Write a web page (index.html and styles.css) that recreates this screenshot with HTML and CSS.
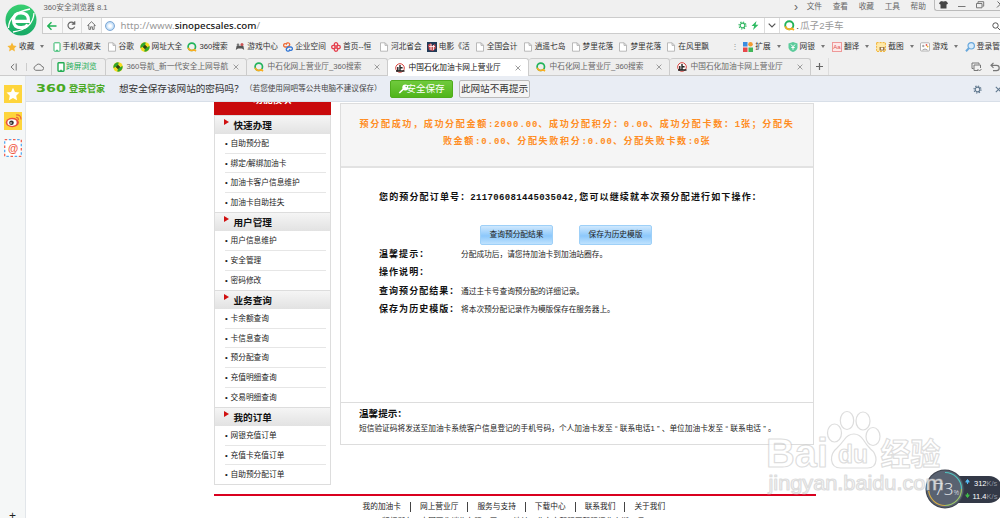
FILE: index.html
```
<!DOCTYPE html>
<html>
<head>
    <title>中国石化加油卡网上营业厅</title>
    <meta charset="utf-8">
    <link rel="stylesheet" href="styles.css">
</head>
<body>
    <svg class="defs">
        <symbol id="doc" viewBox="0 0 10 10"><path d="M1.5 .8h4.7l2.3 2.4v6h-7zM6 1v2.4h2.4" fill="#fff" stroke="#aaa" stroke-width=".8"/></symbol>
        <symbol id="phone" viewBox="0 0 10 10"><rect x="2" y=".8" width="6" height="8.4" rx=".6" fill="#fff" stroke="#2fb768"/><path d="M4 8.3h2" stroke="#2fb768"/></symbol>
        <symbol id="nav" viewBox="0 0 10 10"><circle cx="5" cy="5" r="4.8" fill="#f6dc20"/><path d="M.5 6A4.700 4.700 0 0 1 5.500.3Q6 3 3.500 4.500zM9.500 4a4.700 4.700 0 0 1-5 5.700Q4 7 6.500 5.500z" fill="#31a52e"/><path d="M5 3v4M3 5h4" stroke="#243b12" stroke-width="1.400"/></symbol>
        <symbol id="so" viewBox="0 0 10 10"><g fill="none" stroke-width="1.7"><circle cx="4.8" cy="4.8" r="3.7" stroke="#21b35b"/><path d="M1.2 5.7a3.7 3.7 0 0 0 6 1.9l1.8 1.6" stroke="#f8ad20"/></g></symbol>
        <symbol id="knot" viewBox="0 0 10 10"><g fill="none" stroke="currentColor" stroke-width="1.3"><circle cx="5" cy="2.400" r="1.7"/><circle cx="5" cy="7.600" r="1.7"/><circle class="k2" cx="2.400" cy="5" r="1.7"/><circle cx="7.600" cy="5" r="1.7"/></g></symbol>
        <symbol id="sinopec" viewBox="0 0 10 10"><circle cx="5" cy="5" r="4.3" fill="#fff" stroke="#d9423c"/><path d="M5 2v6M5 4.8h2.6M2.8 4v4M1 8h8.5" fill="none" stroke="#222" stroke-width="1.4"/></symbol>
        <symbol id="star" viewBox="0 0 10 10"><path d="M5 .5l1.4 3 3.2.4-2.3 2.3.6 3.2L5 7.8 2.1 9.4l.6-3.2L.4 3.9l3.200-.4z" fill="currentColor"/></symbol>
        <symbol id="close" viewBox="0 0 10 10"><path d="M2 2l6 6M8 2l-6 6" fill="none" stroke="currentColor" stroke-width="1.2"/></symbol>
        <symbol id="gear" viewBox="0 0 10 10"><circle cx="5" cy="5" r="2.6" fill="none" stroke="currentColor" stroke-width="1.3"/><circle cx="5" cy="5" r="3.9" fill="none" stroke="currentColor" stroke-width="1.3" stroke-dasharray="1.5 1.563"/></symbol>
        <symbol id="game" viewBox="0 0 10 10"><path d="M.8 8l.8-4Q3 2.500 5 4q2-1.500 3.400 0l.8 4-2.200-1.600H3z" fill="#555"/><circle cx="7" cy="2.500" r="1.500" fill="#c55"/><circle cx="3" cy="2.800" r="1.300" fill="#777"/></symbol>
    </svg>

    <!-- browser header -->
    <div class="head">
        <div class="logo">
            <svg width="32" height="32" viewBox="0 0 32 32">
                <defs><linearGradient id="lg" x2="0" y2="1"><stop stop-color="#38cf70"/><stop offset="1" stop-color="#16a966"/></linearGradient></defs>
                <circle cx="16" cy="16" r="15.500" fill="url(#lg)"/>
                <path d="M9 17.300h14.500q.5-8.300-7.500-8.300-7.500 0-7.500 7.500t8 7.200q4.500 0 6.300-3.200" fill="none" stroke="#fff" stroke-width="3.200"/>
                <path d="M3.500 24Q4 9 25 5M29 9Q28 25 8 28" fill="none" stroke="#fff" stroke-width="1.300"/>
            </svg>
        </div>
        <div class="head-main">
            <div class="titlebar">
                <span class="title">360安全浏览器 8.1</span>
                <div class="menu"><span class="more">›</span><span>文件</span><span>查看</span><span>收藏</span><span>工具</span><span>帮助</span></div>
                <div class="winbtns">
                    <svg width="66" height="11" viewBox="0 0 66 11"><path d="M5 1.800l2-.8q1.500 1 3 0l2 .8 1 2-1.500.8v4h-6v-4L4 3.800z" fill="#444"/><path d="M23 6.500h7.500" stroke="#777"/><path d="M41.500 3.500h5.500v4.300h-5.500zM43 3V1.700h5.700v4.500h-1.200" fill="none" stroke="#777"/><path d="M62.500 1.500l6 6M68 1.500l-6 6" stroke="#666"/></svg>
                </div>
            </div>
            <div class="address">
                <div class="navbtn"><svg width="10" height="10" viewBox="0 0 10 10"><path d="M9.500 5H1M4.500 1.300L.8 5l3.700 3.700" fill="none" stroke="#20b255" stroke-width="1.400"/></svg></div>
                <div class="navbtn"><svg width="9" height="9" viewBox="0 0 10 10"><path d="M8.500 6.200A3.800 3.800 0 1 1 7.800 2.500M8.600.3v3.200H5.300" fill="none" stroke="#666" stroke-width="1.300"/></svg></div>
                <div class="navbtn"><svg width="9" height="9" viewBox="0 0 10 10"><path d="M.7 5L5 .8 9.300 5H7.900v4.300H6V6.500H4v2.800H2.100V5z" fill="none" stroke="#666"/></svg></div>
                <div class="globe"></div>
                <div class="url">http://www.<b>sinopecsales.com</b>/</div>
                <div class="addr-tools">
                    <svg width="9" height="9" color="#36b865"><use href="#gear"/></svg>
                    <svg width="8" height="9" viewBox="0 0 8 9"><path d="M5.500 0L.5 5h2.700L2 9l5.500-5.300H4.600z" fill="#2fbb62"/></svg>
                </div>
                <div class="chev"><svg width="8" height="5" viewBox="0 0 8 5"><path d="M.7.7L4 4 7.300.7" fill="none" stroke="#555" stroke-width="1.200"/></svg></div>
                <div class="search"><svg width="11" height="11"><use href="#so"/></svg><i>.</i><span>瓜子2手车</span>
                    <svg class="glass" width="8" height="8" viewBox="0 0 8 8"><circle cx="3.500" cy="3.500" r="2.700" fill="none" stroke="#555"/><path d="M5.500 5.500L8 8" stroke="#555"/></svg>
                </div>
            </div>
        </div>
    </div>

    <div class="bookmarks">
        <div class="bm fav"><svg color="#f7b733"><use href="#star"/></svg>收藏<i class="caret"></i></div>
        <div class="bm mobile"><svg><use href="#phone"/></svg>手机收藏夹</div>
        <div class="bm google"><svg><use href="#doc"/></svg>谷歌</div>
        <div class="bm"><svg><use href="#nav"/></svg>网址大全</div>
        <div class="bm"><svg><use href="#so"/></svg>360搜索</div>
        <div class="bm"><svg><use href="#game"/></svg>游戏中心</div>
        <div class="bm"><svg viewBox="0 0 10 10"><g fill="none" stroke-width="1.300"><path d="M5 5H2.400a1.700 1.700 0 1 1 1-3 1.700 1.700 0 1 1 3 1.500z" stroke="#ee6a35"/><path d="M5 5h2.600a1.700 1.700 0 1 1-1 3 1.700 1.700 0 1 1-3-1.500z" stroke="#3478d6"/></g></svg>企业空间</div>
        <div class="bm"><svg color="#e5404e"><use href="#knot"/></svg>首页--恒</div>
        <div class="bm"><svg><use href="#doc"/></svg>河北省会</div>
        <div class="bm"><svg viewBox="0 0 10 10"><path d="M0 0h10v10H0z" fill="#213a57"/><path d="M1 3l3-2 1 3 3-2 1 4-3 3-4-1z" fill="#c74b50"/><path d="M2 4.500h6M4 2v6M6.500 3v5" stroke="#fff" stroke-width=".8"/></svg>电影《活</div>
        <div class="bm"><svg><use href="#doc"/></svg>全国会计</div>
        <div class="bm"><svg><use href="#doc"/></svg>逍遥七岛</div>
        <div class="bm"><svg><use href="#doc"/></svg>梦里花落</div>
        <div class="bm"><svg><use href="#doc"/></svg>梦里花落</div>
        <div class="bm last"><svg><use href="#doc"/></svg>在风里飘</div>
        <div class="dots">⋮</div>
        <div class="bm ext"><svg viewBox="0 0 10 10"><path d="M0 0h4.500v4.500H0z" fill="#3b8de0"/><circle cx="7.500" cy="2.300" r="2.300" fill="#f59b31"/><path d="M0 5.500h4.500V10H0z" fill="#e8484b"/><path d="M5.500 5.500H10V10H5.500z" fill="#42b65a"/></svg>扩展<i class="caret"></i></div>
        <div class="bm ext"><svg viewBox="0 0 10 10"><path d="M5 0l4.500 1.500v4Q9 8.500 5 10 1 8.500.5 5.500v-4z" fill="#5ccb9b"/><path d="M3 2.500l2 2.300 2-2.300M5 4.800v3M3.300 5.500h3.400" fill="none" stroke="#fff"/></svg>网银<i class="caret"></i></div>
        <div class="bm ext"><span class="aa">Aa</span>翻译<i class="caret"></i></div>
        <div class="bm ext"><svg viewBox="0 0 10 10"><rect x=".6" y=".6" width="8.800" height="8.800" fill="#ffe9a8" stroke="#f2b233" stroke-dasharray="2 1"/><path d="M3.500 5h5v3.500h-5z" fill="#9b7448"/><circle cx="6" cy="6.700" r="1.100" fill="#fff"/></svg>截图<i class="caret"></i></div>
        <div class="bm ext"><svg viewBox="0 0 10 10"><rect x=".5" y=".8" width="9" height="8.200" rx="1" fill="#fff" stroke="#999" stroke-width=".7"/><path d="M2 4h2.500M3.200 2.800v2.400M2.500 8Q5 6 7.500 8" fill="none" stroke="#888" stroke-width=".8"/><circle cx="6.500" cy="3" r=".9" fill="#e85a4f"/><circle cx="7.600" cy="4.600" r=".9" fill="#f0b429"/></svg>游戏<i class="caret"></i></div>
        <div class="bm ext"><svg viewBox="0 0 10 10"><path d="M4.500 5.500L1 9.200" stroke="#69a8dc" stroke-width="2"/><circle cx="6.200" cy="3.800" r="3.200" fill="#d7ebfb" stroke="#69a8dc" stroke-width="1.200"/></svg>登录管家</div>
    </div>

    <div class="tabs">
        <div class="tabs-left">
            <svg width="7" height="8" viewBox="0 0 7 8"><path d="M4.200 1L1 4l3.200 3M6.200.5v7" fill="none" stroke="#777"/></svg>
            <i></i>
            <svg width="11" height="8" viewBox="0 0 11 8"><path d="M2.800 7.300h5.700a2 2 0 0 0 .2-4A3.200 3.200 0 0 0 2.700 3a2.200 2.200 0 0 0 .1 4.300z" fill="none" stroke="#777"/></svg>
        </div>
        <div class="tab cross"><svg class="ico" viewBox="0 0 10 10"><rect x="2" y=".8" width="6" height="8.400" rx=".6" fill="#fff" stroke="#22ac53" stroke-width="1.400"/><path d="M4 8.300h2" stroke="#22ac53"/></svg>跨屏浏览</div>
        <div class="tab"><svg class="ico"><use href="#nav"/></svg><span>360导航_新一代安全上网导航</span><svg class="x"><use href="#close"/></svg></div>
        <div class="tab"><svg class="ico"><use href="#so"/></svg><span>中石化网上营业厅_360搜索</span><svg class="x"><use href="#close"/></svg></div>
        <div class="tab on"><svg class="ico"><use href="#sinopec"/></svg><span>中国石化加油卡网上营业厅</span><svg class="x"><use href="#close"/></svg></div>
        <div class="tab"><svg class="ico"><use href="#so"/></svg><span>中石化网上营业厅_360搜索</span><svg class="x"><use href="#close"/></svg></div>
        <div class="tab"><svg class="ico"><use href="#sinopec"/></svg><span>中国石化加油卡网上营业厅</span><svg class="x"><use href="#close"/></svg></div>
        <div class="newtab"><svg width="7" height="7" viewBox="0 0 7 7"><path d="M3.500 0v7M0 3.500h7" stroke="#666" stroke-width="1.200"/></svg></div>
        <div class="tabs-right">
            <svg width="11" height="10" viewBox="0 0 11 10"><path d="M2.500 6.500H1V1h7v1.500M7 8.500H3V3h6.500v3" fill="none" stroke="#777"/><path d="M6.500 7l2 2 2-2" fill="none" stroke="#777"/></svg>
            <svg width="10" height="10" viewBox="0 0 10 10"><path d="M3.500.8L1 3.300l2.500 2.500M1 3.300h5.500a2.700 2.700 0 0 1 0 5.400H3" fill="none" stroke="#777" stroke-width="1.200"/></svg>
        </div>
    </div>

    <div class="body">
        <div class="rail">
            <div class="rail-ico yellow"><svg width="14" height="14" color="#fff"><use href="#star"/></svg></div>
            <div class="rail-ico yellow"><svg width="18" height="18" viewBox="0 0 18 18"><ellipse cx="8.300" cy="10.500" rx="6.600" ry="4.700" fill="#e9503e"/><ellipse cx="8" cy="10.600" rx="4.600" ry="3.300" fill="#fff"/><circle cx="7.500" cy="10.800" r="2.300" fill="#333"/><circle cx="7" cy="11" r=".8" fill="#fff"/><path d="M12 5.500q2.500-.3 2.500 2.500M12 3q5-.5 5 4.500" fill="none" stroke="#e9663a" stroke-width="1.200"/></svg></div>
            <div class="rail-ico"><svg width="18" height="18" viewBox="0 0 18 18"><rect x=".7" y=".7" width="16.600" height="16.600" fill="#fff"/><rect x=".7" y=".7" width="16.600" height="16.600" fill="none" stroke="#f0604f" stroke-width="1.300" stroke-dasharray="2.500 5.800"/><rect x=".7" y=".7" width="16.600" height="16.600" fill="none" stroke="#56aaf0" stroke-width="1.300" stroke-dasharray="2.500 5.800" stroke-dashoffset="-4.150"/><text x="9" y="12.500" text-anchor="middle" font-size="10.500" font-weight="bold" fill="#ef5a45">@</text></svg></div>
            <div class="rail-foot">+</div>
        </div>
        <div class="view">
            <div class="savebar">
                <span class="brand">360</span><span class="keeper">登录管家</span>
                <span class="ask">想安全保存该网站的密码吗？</span>
                <span class="hint">（若您使用网吧等公共电脑不建议保存）</span>
                <span class="save"><svg width="11" height="10" viewBox="0 0 11 10"><circle cx="7.300" cy="3.400" r="3" fill="#fff"/><circle cx="8.300" cy="2.500" r=".8" fill="#59b920"/><path d="M6 4.500L1.300 9" fill="none" stroke="#fff" stroke-width="1.700"/></svg>安全保存</span>
                <span class="never">此网站不再提示</span>
                <svg class="set" width="9" height="9" color="#61798f"><use href="#gear"/></svg>
                <svg width="9" height="9" color="#61798f"><use href="#close"/></svg>
            </div>

            <div class="page">
                <div class="cols">
                    <div class="side">
                        <div class="side-top"><span>功能模块</span></div>
                        <h3>快速办理</h3>
                        <ul><li>自助预分配</li><li>绑定/解绑加油卡</li><li>加油卡客户信息维护</li><li>加油卡自助挂失</li></ul>
                        <h3>用户管理</h3>
                        <ul><li>用户信息维护</li><li>安全管理</li><li>密码修改</li></ul>
                        <h3>业务查询</h3>
                        <ul><li>卡余额查询</li><li>卡信息查询</li><li>预分配查询</li><li>充值明细查询</li><li>交易明细查询</li></ul>
                        <h3>我的订单</h3>
                        <ul><li>网银充值订单</li><li>充值卡充值订单</li><li>自助预分配订单</li></ul>
                    </div>
                    <div class="main">
                        <div class="result">
                            <div class="r1">预分配成功，成功分配金额<b>:2000.00</b>、成功分配积分：<b>0.00</b>、成功分配卡数：<b>1</b>张；分配失</div>
                            <div class="r2">败金额<b>:0.00</b>、分配失败积分<b>:0.00</b>、分配失败卡数<b>:0</b>张</div>
                        </div>
                        <div class="detail">
                            <div class="order">您的预分配订单号：<b>211706081445035042,</b>您可以继续就本次预分配进行如下操作：</div>
                            <div class="btns"><span>查询预分配结果</span><span>保存为历史模版</span></div>
                            <div class="row"><strong>温馨提示：</strong>分配成功后，请您持加油卡到加油站圈存。</div>
                            <div class="row"><strong>操作说明：</strong></div>
                            <div class="row"><strong>查询预分配结果：</strong>通过主卡号查询预分配的详细记录。</div>
                            <div class="row"><strong>保存为历史模版：</strong>将本次预分配记录作为模版保存在服务器上。</div>
                        </div>
                        <div class="tips">
                            <strong>温馨提示：</strong>
                            <p>短信验证码将发送至加油卡系统客户信息登记的手机号码，个人加油卡发至<q>“</q>联系电话1<q>”</q>、单位加油卡发至<q>“</q>联系电话<q>”</q>。</p>
                        </div>
                    </div>
                </div>
                <div class="foot">
                    <div class="links"><span>我的加油卡</span><span>网上营业厅</span><span>服务与支持</span><span>下载中心</span><span>联系我们</span><span>关于我们</span></div>
                    <div class="copy"><span>版权所有：中国石化销售有限公司</span><span>地址：北京市朝阳区朝阳门北大街22号</span></div>
                </div>
            </div>
        </div>
    </div>

    <svg class="speed" width="78" height="42" viewBox="0 0 78 42">
        <rect x="20" y="8" width="59" height="27" rx="13" fill="#333947"/>
        <circle cx="22" cy="21" r="19.500" fill="#3c424d"/>
        <circle cx="22" cy="21" r="18.500" fill="#596271"/>
        <g fill="none" stroke-width="1.200"><path d="M22 4.500a16.500 16.500 0 0 1 16.500 16.500" stroke="#4fc4c0"/><path d="M38.500 21A16.500 16.500 0 0 1 22 37.500" stroke="#9cc66a"/><path d="M22 37.500A16.500 16.500 0 0 1 5.700 23" stroke="#d7ad45"/></g>
        <text x="11" y="27" class="pct" fill="#e9edf2">73<tspan class="sign">%</tspan></text>
        <path d="M44.500 12v4M42.500 14h4M44.500 11.500l1.500 2h-3z" stroke="#55b9f2" fill="#55b9f2"/>
        <path d="M44.500 25v4M42.500 27h4M44.500 29.500l1.500-2h-3z" stroke="#41b84a" fill="#41b84a"/>
        <text x="51" y="18" class="rate" fill="#fff">312<tspan fill="#8d94a0">K/s</tspan></text>
        <text x="49.500" y="31" class="rate" fill="#fff">11.4<tspan fill="#8d94a0">K/s</tspan></text>
    </svg>

    <svg class="watermark" width="190" height="100" viewBox="0 0 190 100">
        <g fill="#fff" fill-opacity=".8" stroke="#bbb" stroke-opacity=".5" stroke-width="1.200" stroke-linejoin="round">
            <text x="1" y="62.500" class="wm-big" textLength="62" lengthAdjust="spacingAndGlyphs">Bai</text>
            <ellipse cx="69.500" cy="29" rx="7" ry="9"/><ellipse cx="82" cy="16.500" rx="6.700" ry="9"/><ellipse cx="98" cy="17" rx="7" ry="9"/><ellipse cx="108" cy="32.500" rx="7" ry="9"/>
            <path d="M89 30q-6 0-10 6-3 4-7 8-6 5-5.500 12 1 8 9 8h27q8 0 8.500-8 0-7-5.500-11-4-4-7-9-4-6-9.500-6z"/>
            <text x="73" y="59" class="wm-du" textLength="30" lengthAdjust="spacingAndGlyphs">du</text>
            <text x="115.500" y="60.500" class="wm-cn" textLength="60" lengthAdjust="spacingAndGlyphs">经验</text>
            <text x="3.500" y="86" class="wm-url" textLength="175" lengthAdjust="spacingAndGlyphs">jingyan.baidu.com</text>
        </g>
    </svg>
</body>
</html>
```

FILE: styles.css
```
*{box-sizing:border-box;}
body{margin:0;width:1000px;height:518px;overflow:hidden;position:relative;display:flex;flex-direction:column;background:#fff;font-family:"Liberation Sans","Noto Sans CJK SC",sans-serif;font-size:7.7px;line-height:10px;color:#222;white-space:nowrap;}
svg{display:block;flex:none;}
i{font-style:normal;}
.defs{display:none;}

/* browser header */
.head{display:flex;height:34px;background:#f0f0f0;flex:none;}
.logo{width:42px;padding:4px 0 0 5px;height:38px;position:relative;}
.head-main{flex:1;min-width:0;}
.titlebar{display:flex;height:17px;color:#666;}
.title{padding:3px 0 0 1.5px;font-size:7.7px;flex:1;}
.menu{display:flex;gap:10.6px;padding-top:1.5px;margin-right:8px;}
.more{font-size:12px;margin-right:-2px;}
.winbtns{width:66px;height:11px;border:1px solid #bbb;border-width:0 0 1px 1px;border-radius:0 0 0 3px;overflow:hidden;}
.address{display:flex;align-items:center;height:17px;background:#fff;border:1px solid #ccc;border-right:0;}
.navbtn{width:19.5px;height:15px;background:#f8f8f8;border-right:1px solid #ddd;display:flex;align-items:center;justify-content:center;}
.globe{width:10px;height:10px;border-radius:50%;margin:0 6px 0 3px;border:1px solid #7fa8d4;background:radial-gradient(circle,#fff 20%,#a8d0f5 80%);}
.url{font-family:"Noto Sans",sans-serif;font-size:9.7px;color:#999;letter-spacing:.03px;flex:1;}
.url b{font-weight:500;color:#111;}
.addr-tools{display:flex;gap:4px;width:26px;align-items:center;}
.chev{width:16px;height:15px;border:1px solid #ddd;border-width:0 1px;display:flex;align-items:center;justify-content:center;}
.search{width:220px;padding-left:4px;display:flex;align-items:center;font-size:9.6px;color:#999;}
.search i{color:#333;width:5px;text-align:center;}
.glass{margin-left:auto;}

.bookmarks{display:flex;align-items:center;height:24px;background:#f0f0f0;padding:1px 0 0 7px;flex:none;color:#333;}
.bm{display:flex;align-items:center;width:47.9px;flex:none;}
.bm svg{width:10px;height:10px;margin-right:2px;}
.fav{width:44.5px;}
.mobile{width:55px;}
.mobile svg{margin-right:1px;}
.google{width:33px;}
.last{width:65px;}
.dots{width:12px;color:#999;flex:none;}
.bm.ext{width:44.3px;}
.caret{border:2.5px solid transparent;border-top:3px solid #777;border-bottom:0;margin-left:6px;}
.aa{width:10px;height:10px;margin-right:2px;border:1px solid #e99;background:#fde8e8;color:#d55;font-size:6px;line-height:8px;text-align:center;}

/* tab strip */
.tabs{display:flex;align-items:flex-end;height:18px;background:#f0f0f0;border-bottom:1px solid #ccc;flex:none;color:#666;}
.tabs-left{width:51px;height:17px;display:flex;align-items:center;padding-left:10px;}
.tabs-left i{width:1px;height:8px;background:#ccc;margin:0 6px 0 9px;}
.tab{width:141px;height:17px;display:flex;align-items:center;padding:0 6px 0 7px;border:1px solid #ccc;border-width:1px 1px 0 0;border-radius:3px 3px 0 0;background:#eee;flex:none;}
.tab .ico{width:10px;height:10px;margin-right:3.5px;}
.tab .x{width:8px;height:8px;margin-left:auto;color:#999;}
.tab.cross{width:55px;border-left-width:1px;padding-left:4px;color:#22ac53;}
.tab.cross .ico{margin-right:0;}
.tab.on{background:#fff;color:#111;height:18px;margin-bottom:-1px;}
.newtab{width:18px;height:17px;display:flex;align-items:center;justify-content:center;border-right:1px solid #ddd;}
.tabs-right{margin-left:auto;height:17px;display:flex;align-items:center;gap:8px;}

.body{display:flex;flex:1;min-height:0;}
.rail{width:26px;background:#f5f7f7;border-right:1px solid #e2e6ea;display:flex;flex-direction:column;align-items:center;padding-top:9px;gap:9px;flex:none;}
.rail-ico{width:18px;height:18px;display:flex;align-items:center;justify-content:center;}
.yellow{background:#fed53c;}
.rail-foot{margin-top:auto;font-size:12px;line-height:4px;}
.view{flex:1;min-width:0;display:flex;flex-direction:column;}
.savebar{display:flex;align-items:center;height:26px;padding:1px 0 0 10px;background:#e9edf4;border-bottom:1px solid #d8dfe8;flex:none;}
.brand{width:33px;font-family:"DejaVu Sans",sans-serif;font-size:11px;font-weight:bold;transform:scaleX(1.3);transform-origin:left;color:#48a923;}
.keeper{width:50px;font-size:9px;font-weight:bold;color:#48a923;}
.ask{width:126px;font-size:9.6px;color:#333;}
.hint{width:145px;font-size:7.6px;color:#444;}
.save{width:63px;height:18px;display:flex;align-items:center;justify-content:center;background:linear-gradient(#70ca3d,#50b51a);border:1px solid #4eac1d;border-radius:2px;color:#fff;font-size:9.6px;}
.never{width:71px;height:18px;margin-left:6px;line-height:15px;text-align:center;background:#f4f4f4;border:1px solid #bbb;border-radius:2px;font-size:9.6px;color:#333;}
.set{margin:0 12px 0 auto;}
.savebar svg:last-child{margin-right:-3px;}

/* sinopec page */
.page{padding-left:188px;flex:1;min-height:0;overflow:hidden;}
.cols{display:flex;gap:9px;height:392px;}
.side{width:117px;height:383px;border:1px solid #ddd;border-top:0;}
.side-top{height:13px;background:#c90a0c;color:#fff;font-size:9.6px;font-weight:bold;text-align:center;overflow:hidden;margin:0 -1px;}
.side-top span{display:block;margin-top:-7px;}
.side h3{margin:0;height:19px;padding-left:18.5px;font-size:9.6px;font-weight:bold;line-height:19px;color:#111;background:linear-gradient(#f5f5f5,#e2e2e2);border-top:1px solid #ddd;display:flex;}
.side h3::before{content:"";border:3.5px solid transparent;border-left:5px solid #d01010;border-right:0;height:0;margin:3px 4.5px 0 -9.5px;}
.side ul{list-style:none;margin:0;padding:0 4px 0 10px;}
.side li{height:19.6px;line-height:20.5px;border-bottom:1px solid #e6e6e6;}
.side li::before{content:"•";display:inline-block;width:5.5px;}
.side li:last-child{border-bottom:0;}
.main{width:474px;height:342.5px;margin-top:.5px;border:1px solid #ddd;}
.result{height:64px;padding-top:12.5px;background:#f5f5f5;border-bottom:2px solid #e2e2e2;text-align:center;font-size:9.1px;font-weight:bold;line-height:16px;letter-spacing:1.6px;color:#ff8d24;}
.result b,.order b{font-family:"Liberation Mono",monospace;font-size:9px;letter-spacing:.9px;}
.r2{margin-top:-.5px;}
.detail{height:234px;padding:23px 0 0 38px;}
.order{font-size:9px;font-weight:bold;line-height:12px;letter-spacing:1.15px;color:#111;}
.order b{letter-spacing:.33px;}
.btns{display:flex;gap:26px;margin:21.5px 0 0 101px;}
.btns span{width:73px;height:20px;line-height:17px;text-align:center;border:1px solid #9ed0f8;border-radius:2px;background:linear-gradient(#cfe8fd,#8cc8fb 55%,#bfe2fe);}
.row{display:flex;height:18.4px;line-height:19px;}
.row strong{width:82px;font-size:9px;letter-spacing:1.05px;color:#111;}
.tips{border-top:1px solid #ddd;padding:4px 0 0 18px;}
.tips strong{display:block;font-size:9.6px;line-height:13px;color:#111;}
.tips p{margin:4.5px 0 0;}
.tips q{quotes:none;display:inline-block;width:7px;text-align:center;}
.foot{width:602px;border-top:2px solid #d9001f;}
.links{display:flex;margin:6px 0 0 148.5px;}
.links span{border-right:1px solid #444;padding-right:9px;margin-right:9px;line-height:10px;}
.links span:last-child{border:0;}
.copy{display:flex;gap:16px;margin:5px 0 0 168px;}

/* overlays */
.watermark{position:absolute;left:765px;top:404px;}
.wm-big{font-size:41px;font-weight:bold;}
.wm-du{font-size:25px;font-weight:bold;}
.wm-cn{font-size:31px;font-weight:bold;}
.wm-url{font-size:20px;}
.speed{position:absolute;left:923px;top:468px;}
.pct{font-size:17px;font-family:"Open Sans",sans-serif;font-weight:300;}
.sign{font-size:7px;}
.rate{font-size:7.5px;}
```
